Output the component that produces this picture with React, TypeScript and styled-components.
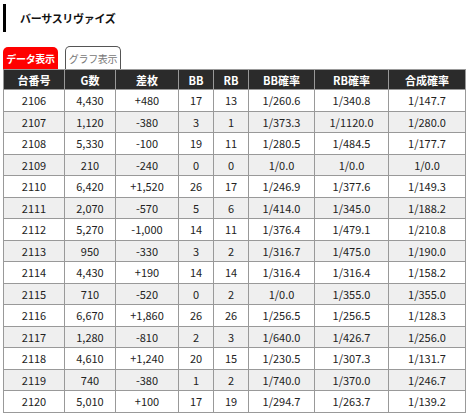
import styled, { createGlobalStyle } from "styled-components";

const GlobalStyle = createGlobalStyle`
    body {
        margin: 0;
        background: #fff;
        font-family: "Noto Sans CJK JP", "Noto Sans", sans-serif;
        color: #222;
    }
`;

type Row = [string, string, string, string, string, string, string, string];

const rows: Row[] = [
    ["2106", "4,430", "+480", "17", "13", "1/260.6", "1/340.8", "1/147.7"],
    ["2107", "1,120", "-380", "3", "1", "1/373.3", "1/1120.0", "1/280.0"],
    ["2108", "5,330", "-100", "19", "11", "1/280.5", "1/484.5", "1/177.7"],
    ["2109", "210", "-240", "0", "0", "1/0.0", "1/0.0", "1/0.0"],
    ["2110", "6,420", "+1,520", "26", "17", "1/246.9", "1/377.6", "1/149.3"],
    ["2111", "2,070", "-570", "5", "6", "1/414.0", "1/345.0", "1/188.2"],
    ["2112", "5,270", "-1,000", "14", "11", "1/376.4", "1/479.1", "1/210.8"],
    ["2113", "950", "-330", "3", "2", "1/316.7", "1/475.0", "1/190.0"],
    ["2114", "4,430", "+190", "14", "14", "1/316.4", "1/316.4", "1/158.2"],
    ["2115", "710", "-520", "0", "2", "1/0.0", "1/355.0", "1/355.0"],
    ["2116", "6,670", "+1,860", "26", "26", "1/256.5", "1/256.5", "1/128.3"],
    ["2117", "1,280", "-810", "2", "3", "1/640.0", "1/426.7", "1/256.0"],
    ["2118", "4,610", "+1,240", "20", "15", "1/230.5", "1/307.3", "1/131.7"],
    ["2119", "740", "-380", "1", "2", "1/740.0", "1/370.0", "1/246.7"],
    ["2120", "5,010", "+100", "17", "19", "1/294.7", "1/263.7", "1/139.2"],
];

const headers = ["台番号", "G数", "差枚", "BB", "RB", "BB確率", "RB確率", "合成確率"];
const widths = [61, 51, 63, 35, 35, 66, 74, 77];

export default function App() {
    return (
        <Page>
            <GlobalStyle />
            <Title>バーサスリヴァイズ</Title>
            <Tabs>
                <Tab active>データ表示</Tab>
                <Tab>グラフ表示</Tab>
            </Tabs>
            <Table>
                <colgroup>
                    {widths.map((w, i) => (
                        <col key={i} style={{ width: w }} />
                    ))}
                </colgroup>
                <thead>
                    <tr>
                        {headers.map((h) => (
                            <HeadCell key={h}>{h}</HeadCell>
                        ))}
                    </tr>
                </thead>
                <tbody>
                    {rows.map((r, ind) => (
                        <BodyRow key={r[0]} striped={ind % 2 === 1}>
                            {r.map((c, j) => (
                                <Cell key={j}>{c}</Cell>
                            ))}
                        </BodyRow>
                    ))}
                </tbody>
            </Table>
        </Page>
    );
}

const Page = styled.div`
    padding: 4px 2px 0 3px;
`;

const Title = styled.h1`
    margin: 0;
    height: 28px;
    display: flex;
    align-items: center;
    padding-left: 14px;
    border-left: 3px solid #000;
    font-size: 11px;
    letter-spacing: -0.3px;
    font-weight: 700;
    color: #111;
`;

const Tabs = styled.div`
    display: flex;
    gap: 7px;
    margin-top: 14px;
    align-items: flex-end;
    height: 23px;
`;

const Tab = styled.div<{ active?: boolean }>`
    box-sizing: border-box;
    width: ${(props) => (props.active ? "55px" : "56px")};
    height: ${(props) => (props.active ? "22px" : "23px")};
    display: flex;
    align-items: center;
    justify-content: center;
    font-size: 10px;
    letter-spacing: -0.3px;
    border-radius: 5px 5px 0 0;
    background: ${(props) => (props.active ? "#ff0000" : "#fff")};
    color: ${(props) => (props.active ? "#fff" : "#777")};
    font-weight: ${(props) => (props.active ? 700 : 400)};
    border: ${(props) => (props.active ? "none" : "1px solid #555")};
    border-bottom: none;
    padding-top: ${(props) => (props.active ? "0" : "1px")};
`;

const Table = styled.table`
    width: 462px;
    border-collapse: collapse;
    table-layout: fixed;
    font-size: 11px;
    text-align: center;
`;

const HeadCell = styled.th`
    height: 19px;
    padding: 0;
    background: #2b2b2b;
    color: #fff;
    font-weight: 700;
    border: 1px solid #999;
`;

const BodyRow = styled.tr<{ striped: boolean }>`
    background: ${(props) => (props.striped ? "#efefef" : "#fff")};
`;

const Cell = styled.td`
    height: 20.5px;
    padding: 0;
    border: 1px solid #999;
    color: #222;
`;
